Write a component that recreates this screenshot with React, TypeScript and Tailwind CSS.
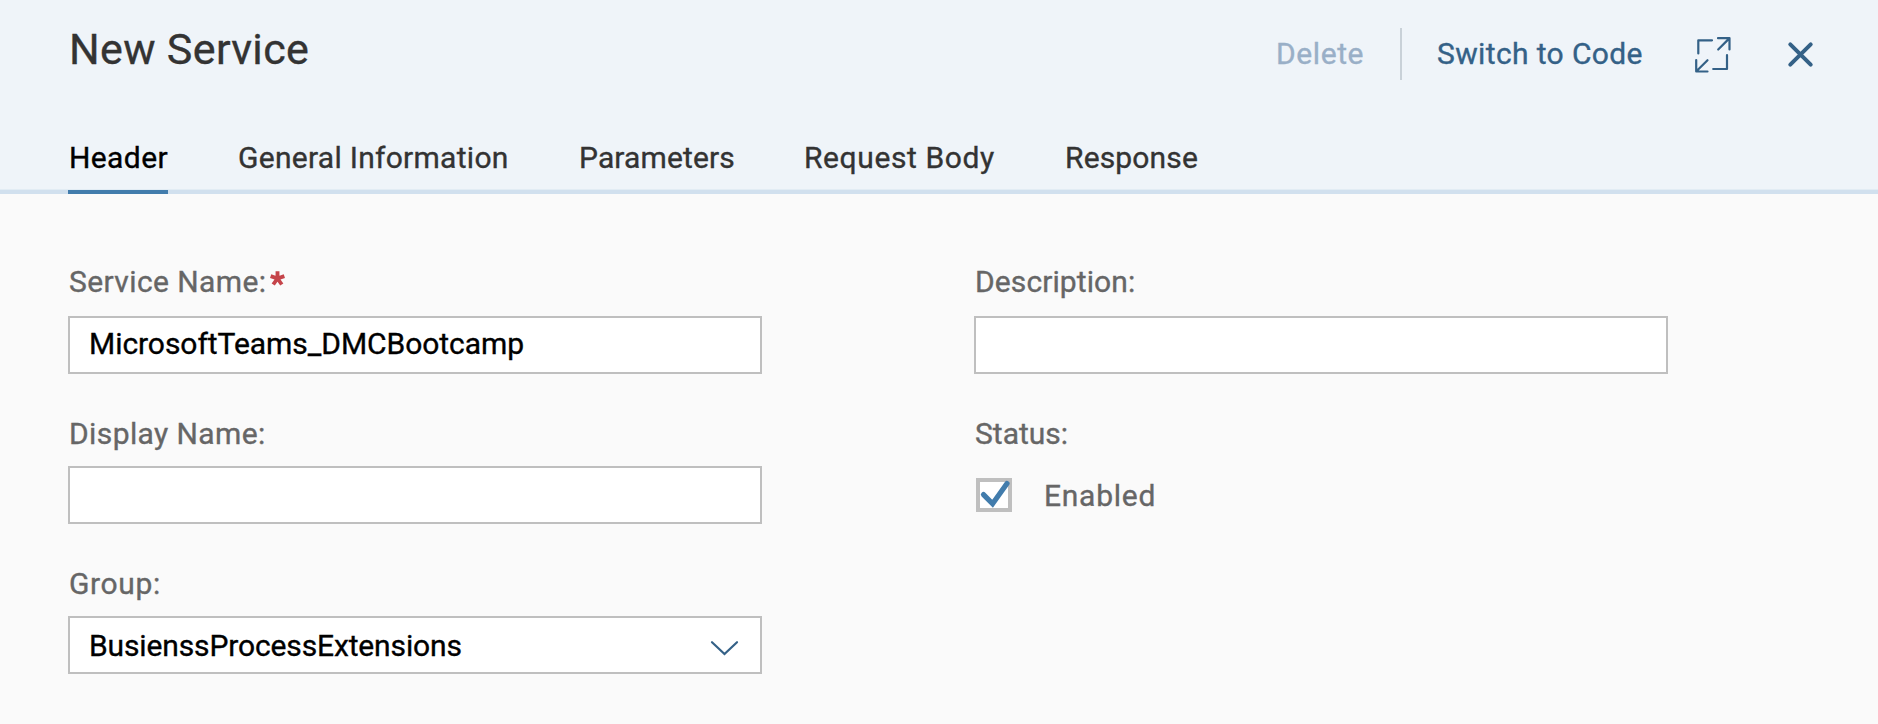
import React from "react";

const tabs = [
  { label: "Header", cls: "w-[100px] pl-[1px] tracking-[0.4px] text-black", active: true },
  { label: "General Information", cls: "ml-[70px] w-[271px] tracking-[0.28px] text-[#333]" },
  { label: "Parameters", cls: "ml-[70px] w-[156px] tracking-[0.13px] text-[#333]" },
  { label: "Request Body", cls: "ml-[69px] w-[192px] tracking-[0.6px] text-[#333]" },
  { label: "Response", cls: "ml-[69px] w-[140px] tracking-[0.15px] text-[#333]" },
];

function Label({ children, required, className = "" }: { children: string; required?: boolean; className?: string }) {
  return (
    <label className={`flex h-[40px] pl-[1px] whitespace-nowrap text-[#666] ${className}`}>
      {children}
      {required && (
        <svg className="mt-[9px] ml-[4px] size-[15px]" viewBox="0 0 14 14" stroke="#c5444a" strokeWidth="3.6">
          <path d="M7 0.3V7M7 7L0.6 4.8M7 7L13.4 4.8M7 7L3 12.6M7 7L11 12.6" />
        </svg>
      )}
    </label>
  );
}

const inputCls = "block h-[58px] w-[694px] border-2 border-[#bfbfbf] bg-white px-[19px] text-black outline-none";

export default function App() {
  return (
    <div className="flex h-[724px] w-[1878px] flex-col overflow-hidden bg-[#fafafa] font-['Roboto',sans-serif] text-[30px] leading-[40px] [-webkit-text-stroke:0.35px]">
      <header className="flex h-[194px] shrink-0 flex-col border-b-4 border-[#d1e0ee] bg-[#eff4f9] shadow-[inset_0_-1px_0_#e2ecf4]">
        <div className="flex h-[130px] shrink-0 items-start">
          <h1 className="mt-[24px] ml-[69px] w-[1207px] text-[43px] leading-[50px] tracking-[0.35px] whitespace-nowrap text-[#333]">New Service</h1>
          <button className="mt-[34px] w-[90px] text-left tracking-[0.6px] whitespace-nowrap text-[#99afc7]">Delete</button>
          <div className="mt-[28px] ml-[34px] h-[52px] w-[2px] bg-[#c9d1d8]" />
          <button className="mt-[34px] ml-[35px] w-[209px] text-left tracking-[0.37px] whitespace-nowrap text-[#346187]">Switch to Code</button>
          <svg className="mt-[36px] ml-[48px] size-[38px]" viewBox="0 0 38 38" fill="none" stroke="#346187" strokeWidth="2.2" strokeLinecap="round" strokeLinejoin="round">
            <path d="M4.3 17.5V4.3H18M33 19.2V33H19.2M24 2.2H35.5V13.5M35.3 2.4L24.2 13.5M2.2 24V35.5H13.5M2.4 35.3L13.5 24.2" />
          </svg>
          <svg className="mt-[41px] ml-[55px] size-[27px]" viewBox="0 0 27 27" fill="none" stroke="#346187" strokeWidth="4" strokeLinecap="round">
            <path d="M3.3 3.3L23.7 23.7M23.7 3.3L3.3 23.7" />
          </svg>
        </div>
        <nav className="flex h-[64px] shrink-0 pl-[68px]">
          {tabs.map((t) => (
            <div key={t.label} className={`${t.cls} h-[64px] shrink-0 whitespace-nowrap pt-[8px] ${t.active ? "border-b-4 border-[#427cac]" : ""}`}>
              {t.label}
            </div>
          ))}
        </nav>
      </header>
      <main className="flex gap-[212px] pt-[68px] pl-[68px]">
        <section className="w-[694px]">
          <Label required className="tracking-[0.4px]">Service Name:</Label>
          <input className={`mt-[14px] pb-[4px] tracking-[-0.05px] ${inputCls}`} defaultValue="MicrosoftTeams_DMCBootcamp" />
          <Label className="mt-[40px] tracking-[0.4px]">Display Name:</Label>
          <input className={`mt-[12px] ${inputCls}`} />
          <Label className="mt-[40px] tracking-[0.65px]">Group:</Label>
          <div className={`mt-[12px] ${inputCls}`}>
            <div className="flex justify-between pt-[8px] tracking-[-0.13px]">
              BusienssProcessExtensions
              <svg className="mt-[14px] mr-[2px] h-[16px] w-[29px]" viewBox="0 0 29 16" fill="none" stroke="#346187" strokeWidth="2.2" strokeLinecap="round">
                <path d="M2 2.2L14.5 14L27 2.2" />
              </svg>
            </div>
          </div>
        </section>
        <section className="w-[694px]">
          <Label className="tracking-[0.1px]">Description:</Label>
          <input className={`mt-[14px] ${inputCls}`} />
          <Label className="mt-[40px]">Status:</Label>
          <div className="mt-[22px] flex pl-[2px] text-[#666]">
            <svg className="mt-[2px] h-[34px] w-[36px]" viewBox="0 0 36 34">
              <rect x="2" y="2" width="32" height="30" fill="#fff" stroke="#bfbfbf" strokeWidth="4" />
              <path d="M7.5 16.6L16.6 25.8L31 5.6" fill="none" stroke="#427cac" strokeWidth="5.2" strokeLinecap="round" />
            </svg>
            <span className="ml-[32px] tracking-[0.75px] whitespace-nowrap">Enabled</span>
          </div>
        </section>
      </main>
    </div>
  );
}
